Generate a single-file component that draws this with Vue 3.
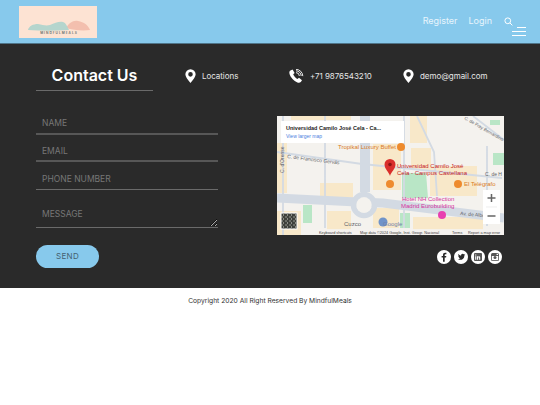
<template>
  <div class="page">
    <header class="top-bar">
      <svg class="logo" viewBox="0 0 78 32" width="78" height="32">
        <rect width="78" height="32" fill="#fde3d3" />
        <path d="M47 22c3-5 7-8 12-7 6 1 10 4 12 9-8 1-17 0-24-2z" fill="#f3bfae" />
        <path d="M9 24c1-4 5-6 10-6 5 1 8 2 12 1 5-2 9-4 13-3 3 1 4 4 6 8-14 1-28 1-41 0z" fill="#b5d5cd" />
        <text x="40" y="28" class="logo-text" text-anchor="middle">MINDFULMEALS</text>
      </svg>
      <div class="nav-wrap">
        <nav class="nav">
          <a>Register</a>
          <a>Login</a>
          <svg viewBox="0 0 10 10" width="9" height="9" fill="none" stroke="#fff" stroke-width="1.1">
            <circle cx="4.2" cy="4.2" r="3.2" />
            <path d="M6.6 6.6l2.7 2.7" />
          </svg>
        </nav>
        <div class="burger"><i class="short"></i><i></i><i></i></div>
      </div>
    </header>

    <main class="contact">
      <div class="contact-top">
        <h1>Contact Us</h1>
        <div class="info" v-for="item in infoItems" :key="item.text">
          <svg v-if="item.icon === 'pin'" viewBox="0 0 12 15" width="11" height="14">
            <path fill-rule="evenodd" fill="#fff" d="M6 0a5.6 5.6 0 0 0-5.6 5.6C.4 9.4 6 15 6 15s5.6-5.6 5.6-9.4A5.6 5.6 0 0 0 6 0zm0 3.2a2.5 2.5 0 1 1 0 5 2.5 2.5 0 0 1 0-5z" />
          </svg>
          <svg v-else viewBox="0 0 15 14" width="15" height="14">
            <path fill="#fff" d="M3.6.4 1 1.8C.2 2.6.2 4 .7 5.4 1.6 8 4.8 12 8.400 13.400c1.300.5 2.600.4 3.400-.5l1.200-1.700-3-2.400-1.600 1.300C7 9.600 4.600 6.800 4.200 5.300l1.400-1.400z" />
            <path fill="none" stroke="#fff" stroke-width=".9" d="M7 3.600a3.600 3.600 0 0 1 3.400 3.400M7 1.800a5.400 5.400 0 0 1 5.200 5.200M7 .3a7 7 0 0 1 6.800 6.800" />
          </svg>
          <span>{{ item.text }}</span>
        </div>
      </div>

      <div class="contact-body">
        <form class="contact-form" @submit.prevent>
          <input class="thick" type="text" placeholder="NAME" />
          <input class="thick" type="text" placeholder="EMAIL" />
          <input type="text" placeholder="PHONE NUMBER" />
          <textarea placeholder="MESSAGE"></textarea>
          <button type="submit">SEND</button>
        </form>

        <div class="right-col">
          <svg class="map" viewBox="0 0 227 119" width="227" height="119">
            <defs>
              <pattern id="sat" width="4" height="4" patternUnits="userSpaceOnUse">
                <rect width="4" height="4" fill="#3f423d" />
                <rect width="2" height="2" fill="#6a6d66" />
                <rect x="2" y="2" width="1" height="2" fill="#8a8c86" />
              </pattern>
            </defs>
            <rect width="227" height="119" fill="#f4f2ee" />
            <g fill="#f8e8c9">
              <rect x="0" y="27" width="10" height="50" />
              <rect x="14" y="0" width="60" height="4" />
              <rect x="96" y="28" width="28" height="46" />
              <rect x="133" y="0" width="17" height="27" />
              <rect x="134" y="32" width="20" height="22" />
              <rect x="153" y="50" width="47" height="30" />
              <rect x="43" y="67" width="33" height="15" />
              <rect x="50" y="95" width="24" height="19" />
              <rect x="136" y="101" width="70" height="13" />
              <rect x="0" y="95" width="24" height="24" />
              <rect x="96" y="92" width="26" height="20" />
            </g>
            <path d="M125 57h24l2 25h-26z" fill="#b9e6c6" />
            <path d="M123 97h10v15h-10zM26 89h9v18h-9z" fill="#b9e6c6" />
            <path d="M216 37h11v12h-11zM213 4h10v5h-10z" fill="#b9e6c6" />
            <g fill="none" stroke="#d3dae3">
              <path stroke-width="10" d="M88 0v76" />
              <path stroke-width="9" d="M0 82l80 4 26 1 121 15" />
              <circle cx="87" cy="89" r="10.500" stroke-width="5.500" />
              <path stroke-width="1.800" d="M6 0v119M48 0v112M127 0v112M140 0l17 36 3 44M196 0l31 24M210 30v80M0 36l85 12 140 14" />
            </g>
            <circle cx="87" cy="89" r="7.700" fill="#f4f2ee" />
            <text x="10" y="42" class="m road" transform="rotate(7 10 42)">C. de Francisco Gervás</text>
            <text x="7" y="57" class="m road" transform="rotate(-90 7 57)">C. d'Orense</text>
            <text x="187" y="3" class="m road small" transform="rotate(30 187 3)">C. de Fray Bernardino</text>
            <text x="208" y="60" class="m road">C. de H</text>
            <text x="183" y="99" class="m road" transform="rotate(5 183 99)">Av. de Alberto</text>
            <text x="61" y="33" class="m orange">Tropikal Luxury Buffet</text>
            <circle cx="124" cy="31" r="4" fill="#ee8b2e" />
            <circle cx="113" cy="68" r="4" fill="#ee8b2e" />
            <circle cx="181" cy="68" r="4" fill="#ee8b2e" />
            <text x="187" y="70" class="m orange">El Telégrafo</text>
            <text x="120" y="52" class="m red">Universidad Camilo José</text>
            <text x="120" y="58.500" class="m red">Cela - Campus Castellana</text>
            <path d="M113 60c-1-4-5.500-7-5.500-11.500a5.500 5.500 0 0 1 11 0c0 4.500-4.500 7.500-5.500 11.500z" fill="#d92f2b" />
            <circle cx="113" cy="48.500" r="1.800" fill="#8e1512" />
            <text x="125" y="85" class="m pink">Hotel NH Collection</text>
            <text x="124" y="92" class="m pink">Madrid Eurobuilding</text>
            <circle cx="165" cy="99" r="4" fill="#e83fb0" />
            <text x="67" y="110" class="m grey">Cuzco</text>
            <circle cx="106" cy="106" r="4.500" fill="#6f93c9" />
            <text x="106" y="110" class="m g-logo">Google</text>
            <rect x="4" y="97" width="16" height="16" fill="url(#sat)" stroke="#fff" />
            <rect x="4" y="5" width="123" height="22" fill="#fff" />
            <text x="9" y="14" class="m title">Universidad Camilo José Cela - Ca...</text>
            <text x="9" y="22" class="m link">View larger map</text>
            <rect x="206" y="74" width="17" height="34" fill="#fff" />
            <path d="M209 91h11" stroke="#e6e6e6" stroke-width=".7" />
            <path d="M214.500 78v8M210.500 82h8M210.500 100h8" stroke="#666" stroke-width="1.500" />
            <rect x="41" y="113" width="186" height="6" fill="#f4f2ee" opacity=".85" />
            <text x="42" y="118" class="m attr">Keyboard shortcuts</text>
            <text x="83" y="118" class="m attr">Map data ©2024 Google, Inst. Geogr. Nacional</text>
            <text x="175" y="118" class="m attr">Terms</text>
            <text x="191" y="118" class="m attr">Report a map error</text>
          </svg>

          <div class="socials">
            <svg viewBox="0 0 14 14" width="14" height="14">
              <circle cx="7" cy="7" r="7" fill="#fff" />
              <path d="M7.700 11.800V7.600h1.400l.2-1.600H7.700V5c0-.5.2-.8.800-.8h.9V2.800C9.200 2.800 8.700 2.700 8.100 2.700c-1.300 0-2.100.8-2.100 2.200V6H4.600v1.600H6v4.200z" fill="#2a2a2a" />
            </svg>
            <svg viewBox="0 0 14 14" width="14" height="14">
              <circle cx="7" cy="7" r="7" fill="#fff" />
              <path d="M11 4.600c-.3.100-.6.200-.9.200.3-.2.600-.5.700-.9-.3.200-.7.300-1 .4a1.600 1.600 0 0 0-2.700 1.500C6.700 5.700 5.300 5 4.400 3.900c-.4.700-.2 1.600.5 2.100-.3 0-.5-.1-.7-.2 0 .8.500 1.400 1.300 1.600-.2.100-.5.100-.7 0 .2.600.8 1.100 1.500 1.100-.7.500-1.500.8-2.400.7 2.800 1.700 6.500 0 6.500-3.800.3-.2.600-.5.800-.8z" fill="#2a2a2a" />
            </svg>
            <svg viewBox="0 0 14 14" width="14" height="14">
              <circle cx="7" cy="7" r="7" fill="#fff" />
              <rect x="3" y="3" width="8" height="8" rx="1" fill="#555" />
              <path d="M4.200 6.200h1.100v3.600H4.200zM4.200 4.400h1.100v1.100H4.200zM6 6.200h1v.5c.5-.8 2.200-.8 2.200.8v2.300H8.100V7.800c0-.8-1-.8-1 0v2H6z" fill="#fff" />
            </svg>
            <svg viewBox="0 0 14 14" width="14" height="14">
              <circle cx="7" cy="7" r="7" fill="#fff" />
              <rect x="3" y="3" width="8" height="8" rx="1.500" fill="#555" />
              <rect x="3.800" y="6" width="6.400" height="4.200" fill="#fff" />
              <circle cx="7" cy="7.500" r="1.500" fill="#555" />
              <rect x="8.600" y="3.800" width="1.400" height="1.200" fill="#fff" />
            </svg>
          </div>
        </div>
      </div>
    </main>

    <footer class="copy">Copyright 2020 All Right Reserved By MindfulMeals</footer>
  </div>
</template>

<script setup>
const infoItems = [
  { icon: 'pin', text: 'Locations' },
  { icon: 'phone', text: '+71 9876543210' },
  { icon: 'pin', text: 'demo@gmail.com' }
]
</script>

<style>
html,
body {
  margin: 0;
  background: #fff;
}
</style>

<style scoped>
.page {
  width: 540px;
  height: 405px;
  overflow: hidden;
  font-family: Inter, "Open Sans", sans-serif;
}
.top-bar {
  height: 44px;
  box-sizing: border-box;
  background: #87c9ec;
  border-bottom: 1px solid #4f7488;
  padding: 6px 14px 0 19px;
  display: flex;
  justify-content: space-between;
  align-items: flex-start;
}
.logo {
  display: block;
}
.logo-text {
  font-size: 3.200px;
  font-weight: 600;
  letter-spacing: 1px;
  fill: #5e6b6b;
}
.nav-wrap {
  display: flex;
  flex-direction: column;
  align-items: flex-end;
  padding-top: 9px;
}
.nav {
  display: flex;
  align-items: center;
  gap: 11px;
  margin-right: 13px;
  font-size: 9px;
  color: #e8f5fc;
}
.nav svg {
  margin: 2px 0 0 1px;
}
.burger {
  width: 14px;
  display: flex;
  flex-direction: column;
  align-items: flex-end;
  gap: 3px;
  margin-top: 1px;
}
.burger i {
  display: block;
  width: 14px;
  height: 1px;
  background: #fff;
}
.burger i.short {
  width: 9px;
}
.contact {
  height: 244px;
  box-sizing: border-box;
  background: #2a2a2a;
  padding: 20.500px 36px 0;
}
.contact-top {
  display: grid;
  grid-template-columns: 149px 104px 114px 1fr;
  align-items: center;
}
h1 {
  margin: 0;
  width: 117px;
  box-sizing: border-box;
  padding-bottom: 4.500px;
  border-bottom: 1px solid #6a6a6a;
  font-size: 16px;
  line-height: 21px;
  font-weight: 600;
  text-align: center;
  color: #fff;
}
.info {
  display: flex;
  align-items: center;
  gap: 6px;
  margin-bottom: 3px;
  font-size: 8px;
  color: #e6e6e6;
}
.info span {
  letter-spacing: -0.05px;
}
.contact-body {
  display: flex;
  justify-content: space-between;
  margin-top: 16px;
}
.contact-form {
  width: 182px;
  display: flex;
  flex-direction: column;
  align-items: flex-start;
}
.contact-form input,
.contact-form textarea {
  display: block;
  width: 100%;
  box-sizing: border-box;
  background: transparent;
  border: 0;
  border-bottom: 1px solid #6a6a6a;
  padding: 0 6px;
  margin: 0;
  font-family: inherit;
  font-size: 8.500px;
  color: #ccc;
  outline: none;
}
.contact-form input {
  height: 27.500px;
  padding-top: 7px;
}
.contact-form input.thick {
  border-bottom: 2px solid #575757;
}
.contact-form input::placeholder,
.contact-form textarea::placeholder {
  color: #777;
  opacity: 1;
}
.contact-form textarea {
  height: 38px;
  padding-top: 19px;
  line-height: 11px;
}
.contact-form button {
  margin-top: 17px;
  width: 63px;
  height: 23px;
  border: 0;
  border-radius: 12px;
  background: #87c9ec;
  color: #44606f;
  font-family: inherit;
  font-size: 8px;
  letter-spacing: 0.3px;
}
.right-col {
  display: flex;
  flex-direction: column;
  align-items: flex-end;
  padding-top: 9px;
}
.map {
  display: block;
}
.m {
  font-family: "Liberation Sans", sans-serif;
}
.road {
  font-size: 5px;
  fill: #5f6368;
}
.road.small {
  font-size: 4.500px;
}
.orange {
  font-size: 6px;
  fill: #d97a24;
}
.red {
  font-size: 6px;
  fill: #c5221f;
}
.pink {
  font-size: 6px;
  fill: #d6339f;
}
.grey {
  font-size: 6px;
  fill: #5f6368;
}
.g-logo {
  font-size: 6px;
  fill: #6f7fa8;
}
.title {
  font-size: 5.500px;
  font-weight: 700;
  fill: #222;
}
.link {
  font-size: 5px;
  fill: #4a80e0;
}
.attr {
  font-size: 3.800px;
  fill: #444;
}
.socials {
  display: flex;
  gap: 3px;
  margin-top: 15px;
  margin-right: 2px;
}
.socials svg {
  display: block;
}
.copy {
  padding-top: 9px;
  text-align: center;
  font-size: 6.700px;
  color: #333;
}
</style>
